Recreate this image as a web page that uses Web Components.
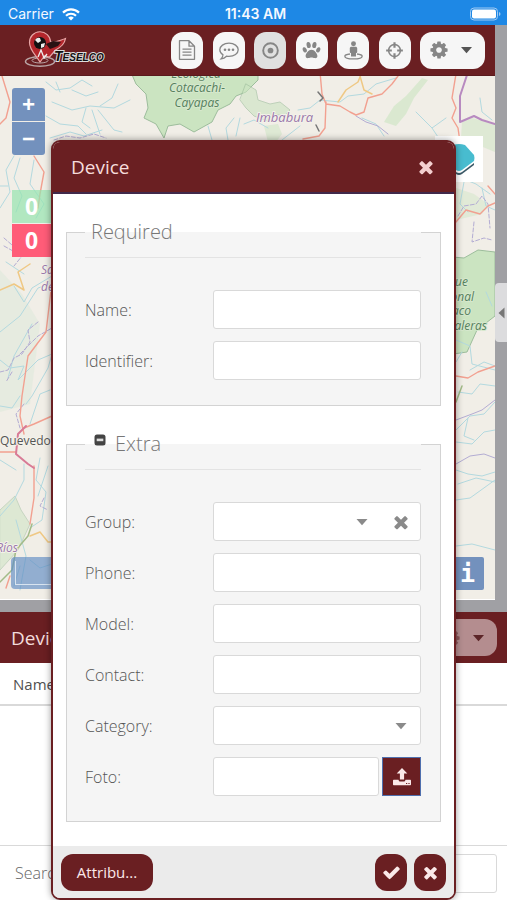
<!DOCTYPE html>
<html lang="en">
<head>
<meta charset="utf-8">
<meta name="viewport" content="width=device-width, initial-scale=1">
<title>Teselco</title>
<style>
  body { margin: 0; font-family: "Open Sans", "Noto Sans", sans-serif; color: #666; --brand: #6a1f22; --line: #d9d9d9; }
</style>
</head>
<body>
<tracker-app>
  <status-bar slot="status"></status-bar>
  <app-toolbar slot="toolbar"></app-toolbar>
  <map-view slot="map"></map-view>
  <device-panel slot="panel"></device-panel>
  <device-dialog slot="dialog" heading="Device">
    <field-group heading="Required">
      <form-row label="Name:"></form-row>
      <form-row label="Identifier:"></form-row>
    </field-group>
    <field-group heading="Extra" collapsible>
      <form-row label="Group:" kind="select" clearable></form-row>
      <form-row label="Phone:"></form-row>
      <form-row label="Model:"></form-row>
      <form-row label="Contact:"></form-row>
      <form-row label="Category:" kind="select"></form-row>
      <form-row label="Foto:" kind="upload"></form-row>
    </field-group>
  </device-dialog>
</tracker-app>

<script>
const ICONS = {
  times: ['0 0 1792 1792', '<path fill="currentColor" d="M1490 1322q0 40-28 68l-136 136q-28 28-68 28t-68-28l-294-294-294 294q-28 28-68 28t-68-28l-136-136q-28-28-28-68t28-68l294-294-294-294q-28-28-28-68t28-68l136-136q28-28 68-28t68 28l294 294 294-294q28-28 68-28t68 28l136 136q28 28 28 68t-28 68l-294 294 294 294q28 28 28 68z"/>'],
  check: ['0 0 1792 1792', '<path fill="currentColor" d="M1671 566q0 40-28 68l-724 724-136 136q-28 28-68 28t-68-28l-136-136-362-362q-28-28-28-68t28-68l136-136q28-28 68-28t68 28l294 295 656-657q28-28 68-28t68 28l136 136q28 28 28 68z"/>'],
  cog: ['0 0 1792 1792', '<path fill="currentColor" fill-rule="evenodd" d="M1152 896q0-106-75-181t-181-75-181 75-75 181 75 181 181 75 181-75 75-181zm512-109v222q0 12-8 23t-20 13l-185 28q-19 54-39 91 35 50 107 138 10 12 10 25t-9 23q-27 37-99 108t-94 71q-12 0-26-9l-138-108q-44 23-91 38-16 136-29 186-7 28-36 28h-222q-14 0-24.500-8.500t-11.500-21.500l-28-184q-49-16-90-37l-141 107q-10 9-25 9-14 0-25-11-126-114-165-168-7-10-7-23 0-12 8-23 15-21 51-66.500t54-70.500q-27-50-41-99l-183-27q-13-2-21-12.500t-8-23.500v-222q0-12 8-23t19-13l186-28q14-46 39-92-40-57-107-138-10-12-10-24 0-10 9-23 26-36 98.500-107.500t94.500-71.500q13 0 26 10l138 107q44-23 91-38 16-136 29-186 7-28 36-28h222q14 0 24.500 8.500t11.500 21.500l28 184q49 16 90 37l142-107q9-9 24-9 13 0 25 10 129 119 165 170 7 8 7 22 0 12-8 23-15 21-51 66.500t-54 70.500q26 50 41 98l183 28q13 2 21 12.500t8 23.500z"/>'],
  file: ['0 0 20 20', '<path fill="none" stroke="currentColor" stroke-width="1.300" stroke-linejoin="round" d="M2.500 .7H12l5.500 5.500v13.100h-15zM12 .7v5.500h5.500M5.500 9.200h9M5.500 12.200h9M5.500 15.200h9"/>'],
  comment: ['0 0 20 20', '<path fill="none" stroke="currentColor" stroke-width="1.300" d="M10 3.200c5.200 0 9.200 2.900 9.200 6.600s-4 6.600-9.200 6.600c-.9 0-1.700-.1-2.500-.2-1.500 1.500-3.300 2.400-5.300 2.600 1-1 1.600-2.200 1.800-4C2 13.600.8 11.800.8 9.800.8 6.100 4.800 3.200 10 3.200z"/><g fill="currentColor"><circle cx="6" cy="9.800" r="1.300"/><circle cx="10" cy="9.800" r="1.300"/><circle cx="14" cy="9.800" r="1.300"/></g>'],
  target: ['0 0 20 20', '<circle cx="10" cy="10" r="7.700" fill="none" stroke="currentColor" stroke-width="2"/><circle cx="10" cy="10" r="3" fill="currentColor"/>'],
  paw: ['0 0 20 20', '<g fill="currentColor"><ellipse cx="7" cy="4.300" rx="2.200" ry="3.200" transform="rotate(-10 7 4.300)"/><ellipse cx="13" cy="4.300" rx="2.200" ry="3.200" transform="rotate(10 13 4.300)"/><ellipse cx="2.900" cy="9.300" rx="2" ry="2.900" transform="rotate(-25 2.900 9.300)"/><ellipse cx="17.100" cy="9.300" rx="2" ry="2.900" transform="rotate(25 17.100 9.300)"/><path d="M10 9.200c3 0 6.200 3.900 6.200 6.600 0 2-1.500 2.400-2.900 2.200-1.300-.2-2-.7-3.300-.7s-2 .5-3.300.7c-1.400.2-2.900-.2-2.900-2.200C3.800 13.100 7 9.200 10 9.200z"/></g>'],
  person: ['0 0 20 20', '<circle cx="10" cy="2.900" r="2.600" fill="currentColor"/><path fill="currentColor" d="M8 6h4c1.200 0 1.900.6 1.900 1.700v3.900c0 .8-.6 1.100-1.300.9V16.300H7.400v-3.800c-.7.200-1.300-.1-1.300-.9V7.700C6.100 6.600 6.800 6 8 6z"/><path fill="none" stroke="currentColor" stroke-width="1.400" d="M6.300 13.700c-3.300.4-5.400 1.100-5.400 2.300 0 1.800 4.100 2.900 9.100 2.900s9.100-1.100 9.100-2.900c0-1.200-2.100-1.900-5.400-2.300"/>'],
  crosshair: ['0 0 20 20', '<circle cx="10" cy="10" r="6.200" fill="none" stroke="currentColor" stroke-width="1.600"/><path stroke="currentColor" stroke-width="2.300" d="M10 1.200v6M10 12.800v6M1.200 10h6M12.800 10h6"/>'],
  caret: ['0 0 12 8', '<path fill="currentColor" d="M.5 1h11L6 7.200z"/>'],
  upload: ['0 0 20 20', '<path fill="currentColor" fill-rule="evenodd" d="M10 1l5.300 5.600h-3.200v5.900H7.900V6.600H4.700zM2 12.700h4.500c.2 1.200 1 1.900 2 1.900h3c1 0 1.800-.7 2-1.900H18c.6 0 1 .4 1 1v3.600c0 .6-.4 1-1 1H2c-.6 0-1-.4-1-1v-3.600c0-.6.4-1 1-1zm12 3.200v1.200h1.200v-1.200zm2.400 0v1.200h1.200v-1.200z"/>'],
  minusbox: ['0 0 12 12', '<rect x=".5" y=".5" width="11" height="11" rx="2.500" fill="#444"/><rect x="2.700" y="4.600" width="6.600" height="2.600" fill="#ddd"/>'],
  left: ['0 0 8 12', '<path fill="currentColor" d="M7.500 .5v11L1.500 6z"/>']
};
const icon = (name, w, h = w) => `<svg class="icon" width="${w}" height="${h}" viewBox="${ICONS[name][0]}" aria-hidden="true">${ICONS[name][1]}</svg>`;
const BASE = `<style>
  :host, *, *::before, *::after { box-sizing: border-box; }
  button, input, select { font: inherit; color: inherit; margin: 0; }
  button { padding: 0; border: 0; background: none; display: flex; align-items: center; justify-content: center; }
  svg { display: block; }
</style>`;

class BaseElement extends HTMLElement {
  connectedCallback() {
    if (this.shadowRoot) return;
    this.attachShadow({ mode: 'open' }).innerHTML = BASE + this.view();
  }
}

customElements.define('tracker-app', class extends BaseElement {
  view() { return `<style>
    :host { display: flex; flex-direction: column; min-height: 100vh; position: relative; }
    .stage { flex: 1; display: grid; grid-template-columns: minmax(0, 1fr) 12px; background: #a0a0a4; padding-bottom: 12px; }
    .left { display: flex; flex-direction: column; }
    ::slotted(map-view) { flex: 1; }
    .side { display: flex; flex-direction: column; padding-top: 258px; }
    .side button { height: 59px; width: 100%; background: #dcdcde; color: #777; border-radius: 4px 0 0 4px; }
  </style>
  <slot name="status"></slot>
  <div class="stage"><div class="left"><slot name="toolbar"></slot><slot name="map"></slot></div>
  <div class="side"><button type="button" aria-label="Expand panel">${icon('left', 8, 12)}</button></div></div>
  <slot name="panel"></slot><slot name="dialog"></slot>`; }
});

customElements.define('status-bar', class extends BaseElement {
  view() { return `<style>
    :host { display: grid; grid-template-columns: 1fr auto 1fr; align-items: center; height: 25px; padding: 3px 4px 0 8px; background: #1e88e5; color: #f4f8ff; font: 400 14px/20px Inter, Roboto, sans-serif; }
    .net { display: flex; align-items: center; gap: 8px; }
    b { font-weight: 600; }
    .battery { justify-self: end; margin-right: 2px; }
  </style>
  <div class="net"><span>Carrier</span><svg width="18" height="13" viewBox="0 0 18 13" fill="none" stroke="#fff" stroke-width="2.200"><path d="M1 4.600a11.300 11.300 0 0 1 16 0M4 7.800a7.100 7.100 0 0 1 10 0"/><path d="M9 12.600L6.200 9.800a4 4 0 0 1 5.600 0z" fill="#fff" stroke="none"/></svg></div>
  <b>11:43 AM</b>
  <svg class="battery" width="32" height="14" viewBox="0 0 32 14"><rect x="1.500" y="1" width="27" height="12" rx="3.500" fill="none" stroke="#9fcaf3"/><rect x="3" y="2.500" width="24" height="9" rx="2" fill="#fff"/><path d="M30 5v4q1.500-.5 1.500-2T30 5z" fill="#9fcaf3"/></svg>`; }
});

customElements.define('app-toolbar', class extends BaseElement {
  view() {
    const items = [['file', 'Reports', 20], ['comment', 'Events', 20], ['target', 'Follow', 19], ['paw', 'Tracks', 19], ['person', 'Street view', 19], ['crosshair', 'Locate', 19]];
    return `<style>
    :host { display: flex; align-items: center; height: 51px; background: var(--brand); border-bottom: 1px solid #5a1a1d; }
    .logo { flex: 0 0 171px; padding-left: 20px; }
    nav { flex: 1; display: flex; justify-content: space-between; padding-right: 10px; }
    button { width: 32px; height: 37px; border-radius: 12px; background: #f6f6f6; color: #868686; }
    button.on { background: #e0e0e0; }
    button.menu { width: 65px; gap: 11px; padding-right: 4px; }
    .menu .icon + .icon { color: #555; }
  </style>
  <a class="logo" href="#" aria-label="Teselco">
  <svg width="90" height="42" viewBox="20 29 90 42">
    <ellipse cx="40" cy="61.500" rx="14.500" ry="4.800" fill="none" stroke="#b9a5a5" stroke-width="1.500"/><ellipse cx="40" cy="60.500" rx="8" ry="2.500" fill="none" stroke="#b9a5a5"/>
    <path d="M40 62C35 54 29.500 50 29.500 42.500a10.500 10.500 0 0 1 21-.5c5 1 9-1.500 15-3.500-1 6-5 9-10 11.500l-6 7-5-1z" fill="#b3262c" stroke="#e8a7a7" stroke-width="1.200"/>
    <path d="M46 44l7-3 8 1-3 4-8 3z" fill="#2a1213"/>
    <circle cx="40" cy="43" r="6" fill="#111"/><path d="M35 40q2-3 5-2l1 3-3 2zM41 44l4-1-1 4-3 1z" fill="#eee"/>
    <path d="M38 57l3-7 3 8 3-4" fill="none" stroke="#eee" stroke-width="1.300"/>
    <text x="54" y="61" font-family="Liberation Sans, sans-serif" font-weight="700" font-style="italic" font-size="14" fill="#111" stroke="#ddd" stroke-width="2" paint-order="stroke">T<tspan font-size="10">ESELCO</tspan></text>
  </svg></a>
  <nav>${items.map(([n, l, s]) => `<button type="button" aria-label="${l}" class="${n === 'target' ? 'on' : ''}">${icon(n, s)}</button>`).join('')}
  <button type="button" class="menu" aria-label="Settings">${icon('cog', 20)}${icon('caret', 13, 8)}</button></nav>`; }
});

customElements.define('map-view', class extends BaseElement {
  view() { return `<style>
    :host { display: block; position: relative; overflow: hidden; background: #f1eee7; border-bottom: 1px solid #fff; }
    .canvas { position: absolute; inset: 0; width: 100%; height: 100%; }
    .overlay { position: absolute; display: flex; flex-direction: column; gap: 1px; }
    .zoom { top: 12px; left: 12px; }
    .zoom button, .info button { width: 33px; height: 33px; background: #7391bd; color: #fff; font: 700 23px/33px "Open Sans", sans-serif; }
    .zoom button:first-child { border-radius: 3px 3px 0 0; } .zoom button:last-child { border-radius: 0 0 3px 3px; }
    .count { top: 114px; left: 12px; color: #fff; font: 700 23px/33px "Open Sans", sans-serif; }
    .count span { width: 60px; padding-left: 13px; background: #ff5c78; } .count .ok { background: rgb(150 228 175 / .7); }
    .layers { top: 60px; right: 12px; } .layers button { width: 48px; height: 46px; background: #fff; }
    .info { right: 11px; bottom: 9px; } .info button { border-radius: 2px; font: 700 25px/33px "DejaVu Sans Mono", monospace; }
    .scale { left: 11px; bottom: 10px; width: 80px; height: 32px; padding: 4px; border-radius: 4px; background: rgb(96 140 195 / .65); }
    .scale i { flex: 1; border: 1px solid #d8e4f0; border-top: 0; }
  </style>
  <svg class="canvas" viewBox="0 76 495 523" preserveAspectRatio="xMidYMin slice" aria-hidden="true" fill="none" stroke-linejoin="round" stroke-linecap="round">
    <g fill="#cbe4c1" stroke="#9dbd9c">
      <path d="M130 70L136 84l10 10 2 14-4 10 12 6 8 14 4-12 12-2 14 8 18-10 6-12 12-6 6-8 10-4 8-8 4-4v-26z"/>
      <path d="M246 84l10 6 2 10 12 4 10-2 10 8-6 6-10-2-4 8-16-6-8-8-6-8z" opacity=".6"/>
      <path d="M264 126l14-2 4 10-6 8h-8z" opacity=".5" stroke="none"/>
      <path d="M384 122l10-16 12-10 16-18 6 2-14 18-8 16-10 12z" opacity=".6" stroke="none"/>
      <path d="M462 122l10-4 23 6v28l-34-14z" opacity=".5" stroke="none"/>
      <path d="M456 188l18 6 14 10-6 10-26 6z" opacity=".4" stroke="none"/>
      <path d="M440 256l24 2 14-8 17 2v64l-18 14-10 22-27 4z"/>
      <path d="M0 510l15-14 6 14 9 14-12 26-18 20z" opacity=".5"/>
      <path d="M0 270l22 24 18 30-10 80-30 8z" fill="#e0eadc" stroke="none" opacity=".6"/>
    </g>
    <g stroke="#b3d9df" stroke-width="1">
      <path d="M46 82l10 8 14-2 12-8 10 6M52 102l20 8 18-4 24 2 16-8M86 108l-4 14 8 6M92 110l8 24M98 110l16 20 8 2M46 116l14 8 18 2 8 8M50 138l20-6 14 4 18-6M118 84l-6 14-12 8M60 92l-4-10M72 90l14 6 12-4"/>
      <path d="M298 110l12-2 10-8 20 2 8-6 16-2 12-10 20-6M300 126l-18 14M362 118l14 6 8 12M416 112l16 16 14-10M432 128l8 12M480 98l2 14 10 8M234 118l-8 10 2 12M208 126l4 14M244 124l10-4 14 8M240 118l-4 18"/>
      <path d="M14 156l-8 14 4 22-10 16M20 158l-6 20 8 18-6 16M0 186h8M34 160l-4 24 14 20-8 14M6 262l18 12M14 286l10 16 8-14 20-12M0 332l20-16 18-28 12-4M0 360l10 8 14-2-6 14 20-20 14-6M8 378l6-22 18-32M0 406l12 2 8-12M26 404l6-8 16-28 4-14M30 424l10-30 10-4M40 458l-4 22 10 12-4 28-12 8M0 516l14-16 10-20 0-16M48 466l-10 30M16 520l10 36-6 34M0 460l16 10M30 560l10 8 12-4M20 566l-6 20"/>
      <path d="M456 176l20 8 14 10M464 182l-4 22 8 8M482 188l4 18 9 4M456 340l14 6 2 18 23 6M462 352l-6 10M470 370l14-8 11 4M458 392l14 2 8-10 15 2M456 430l14-14 14-2 11-12M468 418l-4 18 10 4M456 442l16 2 12-12 11-2M456 470l12 4 14 2 13-4M458 484l18-6 19 4M456 500l14-2 25-18M456 546l16-2 23 6M486 292l6 14"/>
    </g>
    <g stroke="#b3acd3"><path d="M0 372l8-2 6-12 8-4 8-12-2-12 10-8M12 372l-6 10M20 354l18-18 14-8M4 238l16 14M4 246l18 10-8 10M24 404l-8 10 4 14M44 498l-4 8 8 4M54 140l12-4 14 2 14-4 12 4M458 216l6-10 12-2 6-8 6 8 2 24M474 222l-2 20 12-4 8 2" stroke-dasharray="4 2"/><path d="M456 420l16-6 10-4 13-10M456 464l14-8 14-2 11 4M356 116l10 6 12 4 10 8" /></g>
    <g stroke="#f2a090" stroke-width="1.400">
      <path d="M2 76l8 26-4 16-6 6M34 156l10 16-4 22-2 14M52 282l-6 50-18 24-6 40-2 20 4 18M24 428l10-4 18-8M34 466l0 32-4 26M0 452l16 0M10 576l-4 12"/>
      <path d="M320 72l2 22 4 10 14 2 10 6 6 3 8-3 4-14 14-4 10-10 6-8M326 102l-1 26-6 8-16 3M456 376l12 2 10-6 17-6M456 222l10-12 14 4 8-8 7-3M488 186l7 8M456 74l-4 24 4 10-4 10 6 10 2 14"/>
    </g>
    <path d="M26 426l-8 8-2 20 12 10 6 4" stroke="#d87b96" stroke-width="2"/>
    <path d="M338 102l8-12 12-8 4-10M360 76l4 14 8 4M0 290l14-6 10 6-6-18 12-8M30 536l10-4 8 10 4 0" stroke="#efc884" stroke-width="1.500"/>
    <path d="M468 72l-8 24v26l14-6 8 4 13 4" stroke="#b88ac0" stroke-width="2"/>
    <path d="M0 582l12-12 4-20 12-14 4-12M456 402l6-16" stroke="#a2bb88" stroke-width="1.500"/>
    <path d="M318 92l5 6-3 3M316 125l3 6" stroke="#777" stroke-width="1.500"/>
    <g stroke="#f4f2ea" stroke-width="2" paint-order="stroke" font-family="Open Sans, Noto Sans, sans-serif" font-size="12" font-style="italic">
      <g fill="#55805d" stroke="#d6e8cd" text-anchor="middle"><text x="196" y="78">Ecológica</text><text x="197" y="92">Cotacachi-</text><text x="197" y="107">Cayapas</text></g>
      <g fill="#55805d" stroke="#d6e8cd" text-anchor="end"><text x="468" y="286">Parque</text><text x="474" y="301">Nacional</text><text x="471" y="315">Sumaco</text><text x="487" y="330">Galeras</text></g>
      <g fill="#9a78ac"><text x="256" y="122" font-size="13">Imbabura</text><text x="18" y="552" text-anchor="end">Ríos</text><text x="41" y="274">Santo</text><text x="41" y="291">de los</text></g>
      <text x="0" y="445" fill="#555" font-style="normal">Quevedo</text>
    </g>
  </svg>
  <div class="overlay zoom"><button type="button" aria-label="Zoom in">+</button><button type="button" aria-label="Zoom out">−</button></div>
  <div class="overlay count"><span class="ok">0</span><span>0</span></div>
  <div class="overlay layers"><button type="button" aria-label="Layers"><svg width="48" height="46" viewBox="0 0 48 46"><path d="M9 24h30v5L27 38q-3 2-6 0L9 29z" fill="#3c5a68"/><path d="M9 22h30v5L27 36q-3 2-6 0L9 27z" fill="#fff"/><path d="M18 9q6-2 12 0l9 10q1 3 0 6L27 34q-3 2-6 0L9 25q-1-3 0-6z" fill="#48bccf"/></svg></button></div>
  <div class="overlay info"><button type="button" aria-label="Map information">i</button></div>
  <div class="overlay scale"><i></i></div>`; }
});

customElements.define('device-panel', class extends BaseElement {
  view() { return `<style>
    :host { display: flex; flex-direction: column; height: 32vh; min-height: 200px; background: #fff; }
    header { display: flex; align-items: center; justify-content: space-between; height: 51px; padding: 0 10px 0 11px; background: var(--brand); color: #f3dcdc; }
    h2 { margin: 0; font-size: 19px; font-weight: 400; }
    header button { width: 65px; height: 37px; gap: 11px; padding-right: 4px; border-radius: 12px; background: #b48d8f; color: #8a5558; }
    header .icon + .icon { color: #5c2528; }
    .grid { flex: 1; }
    table { width: 100%; border-collapse: collapse; }
    th { height: 42px; padding: 0 13px; text-align: left; font-size: 15px; font-weight: 400; color: #505050; border-bottom: 2px solid var(--line); }
    footer { display: flex; align-items: center; gap: 10px; height: 55px; padding: 0 10px 0 15px; border-top: 1px solid var(--line); font-size: 16px; font-weight: 300; }
    input { flex: 1; min-width: 0; height: 39px; border: 1px solid var(--line); border-radius: 3px; background: #fff; }
  </style>
  <header><h2>Devices</h2><button type="button" aria-label="Device settings">${icon('cog', 20)}${icon('caret', 13, 8)}</button></header>
  <div class="grid"><table><thead><tr><th>Name</th></tr></thead></table></div>
  <footer><label for="q">Search:</label><input id="q" type="text"></footer>`; }
});

customElements.define('device-dialog', class extends BaseElement {
  view() { return `<style>
    :host { position: absolute; top: 140px; left: 51px; right: 51px; display: flex; flex-direction: column; border: 2px solid var(--brand); border-radius: 9px; background: #fff; overflow: hidden; box-shadow: 0 0 7px rgb(0 0 0 / .4); }
    header { display: flex; align-items: center; justify-content: space-between; height: 52px; padding: 0 10px 0 18px; background: var(--brand); border-bottom: 2px solid #40294a; color: #f6dcdc; }
    h1 { margin: 0; font-size: 19px; font-weight: 400; }
    header button { width: 36px; height: 36px; color: #f3cfcf; }
    form { display: grid; gap: 12px; padding: 12px 13px 24px; }
    footer { display: flex; align-items: center; gap: 7px; height: 52px; padding: 0 8px; background: #ebebeb; color: #fbe9e9; }
    footer button { width: 32px; height: 37px; border-radius: 12px; background: var(--brand); }
    footer .attrs { width: 92px; margin-right: auto; font-size: 15px; }
  </style>
  <header><h1>${this.getAttribute('heading')}</h1><button type="button" aria-label="Close">${icon('times', 20)}</button></header>
  <form><slot></slot></form>
  <footer><button type="button" class="attrs">Attribu...</button><button type="button" aria-label="Save">${icon('check', 19)}</button><button type="button" aria-label="Cancel">${icon('times', 19)}</button></footer>`; }
});

customElements.define('field-group', class extends BaseElement {
  view() { return `<style>
    :host { display: block; }
    fieldset { min-width: 0; margin: 0; padding: 0 19px 25px 18px; border: 1px solid #d3d3d3; background: #f5f5f5; }
    legend { display: flex; align-items: center; gap: 6px; width: 100%; height: 52px; padding: 0 6px; border-bottom: 1px solid #e3e3e3; font-size: 20px; font-weight: 300; color: #777; }
    legend button { width: 18px; height: 16px; margin: 0 0 7px; }
    .rows { display: grid; gap: 12px; padding-top: 32px; }
  </style>
  <fieldset><legend>${this.hasAttribute('collapsible') ? `<button type="button" aria-label="Collapse">${icon('minusbox', 12)}</button>` : ''}<span>${this.getAttribute('heading')}</span></legend>
  <div class="rows"><slot></slot></div></fieldset>`; }
});

customElements.define('form-row', class extends BaseElement {
  view() {
    const kind = this.getAttribute('kind');
    let field = '<input id="f" type="text">';
    if (kind === 'select') field = `<div class="pick"><select id="f"><option></option></select><span class="caret">${icon('caret', 12, 8)}</span>${this.hasAttribute('clearable') ? `<button class="clear" type="button" aria-label="Clear">${icon('times', 20)}</button>` : ''}</div>`;
    if (kind === 'upload') field = `<div class="file"><input id="f" type="text"><button class="up" type="button" aria-label="Upload">${icon('upload', 20)}</button></div>`;
    return `<style>
    :host { display: grid; grid-template-columns: 128px minmax(0, 1fr); align-items: center; font-size: 16px; line-height: 20px; font-weight: 300; color: #555; }
    input, .pick { width: 100%; height: 39px; border: 1px solid var(--line); border-radius: 3px; background: #fff; padding: 0 10px; }
    .pick { display: grid; grid-template-columns: 1fr auto auto; padding: 0; color: #8a8a8a; }
    select { grid-area: 1 / 1 / 2 / 3; appearance: none; width: 100%; height: 37px; border: 0; background: none; padding: 0 39px 0 10px; }
    .caret { grid-area: 1 / 2; width: 39px; display: grid; place-items: center; pointer-events: none; }
    .clear { grid-area: 1 / 3; width: 39px; }
    .file { display: flex; gap: 3px; }
    .up { flex: 0 0 39px; height: 39px; background: var(--brand); border: 1px solid #4f6fae; color: #fbe9e9; }
  </style><label for="f">${this.getAttribute('label')}</label>${field}`; }
});
</script>
</body>
</html>
